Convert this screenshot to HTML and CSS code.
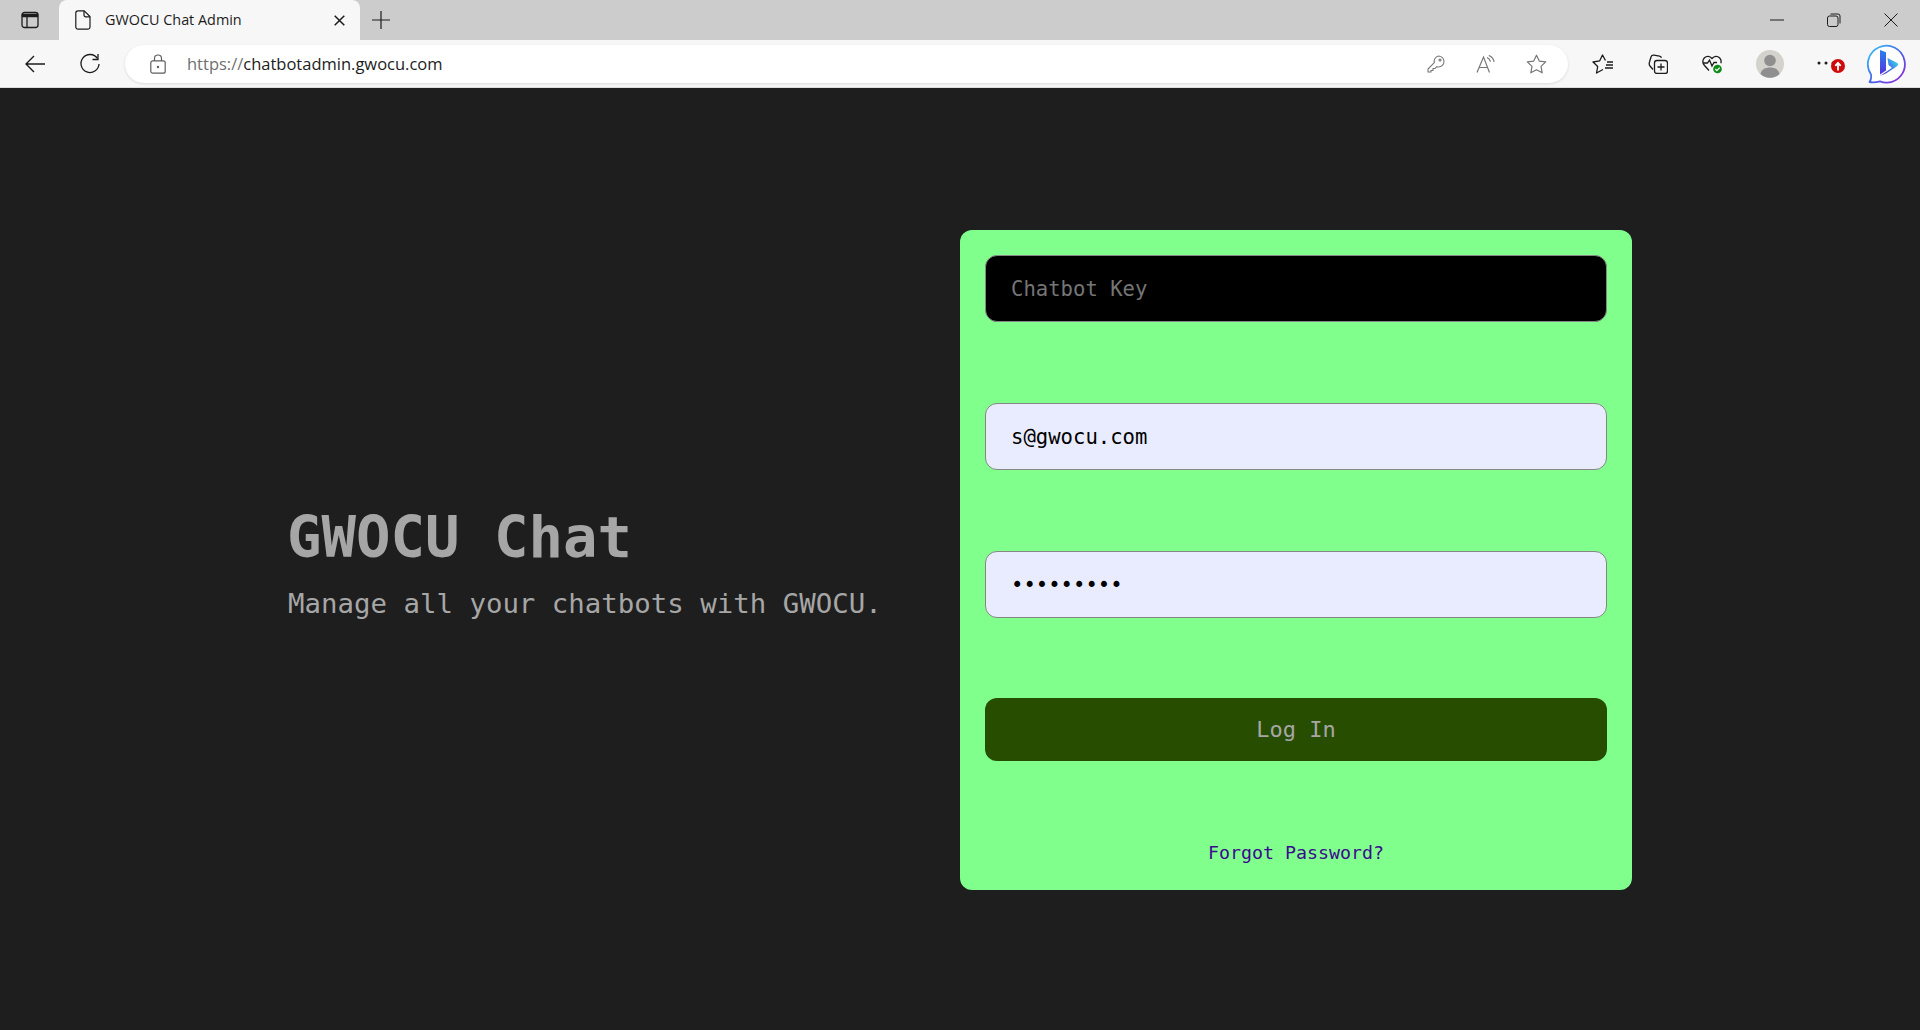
FILE: index.html
```html
<!DOCTYPE html>
<html lang="en">
<head>
  <meta charset="UTF-8">
  <meta name="viewport" content="width=device-width, initial-scale=1.0">
  <title>GWOCU Chat Admin</title>
  <link rel="stylesheet" href="styles.css">
</head>
<body>
  <div class="tab-strip">
    <button class="strip-btn sidebar-btn">
      <svg width="18" height="18" viewBox="0 0 18 18" fill="none" stroke="#1c1c1c" stroke-width="1.3"><rect x="1" y="1.5" width="16" height="15" rx="2.5"/><path d="M1.5 3.5h15v2.2h-15z" fill="#1c1c1c"/><path d="M6 5.5v10.5"/></svg>
    </button>
    <div class="tab">
      <svg width="16" height="20" viewBox="0 0 16 20" fill="none" stroke="#1c1c1c" stroke-width="1.2"><path d="M3 .8h6.2l5.8 5.8V17a2.2 2.2 0 0 1-2.2 2.2H3A2.2 2.2 0 0 1 .8 17V3A2.2 2.2 0 0 1 3 .8z"/><path d="M9 1v4a1.8 1.8 0 0 0 1.8 1.8H15"/></svg>
      <span class="tab-title">GWOCU Chat Admin</span>
      <svg class="tab-close" width="11" height="11" viewBox="0 0 11 11" stroke="#1c1c1c" stroke-width="1.5"><path d="M.7.7l9.6 9.6M10.3.7L.7 10.3"/></svg>
    </div>
    <button class="strip-btn new-tab">
      <svg width="18" height="18" viewBox="0 0 18 18" stroke="#1c1c1c" stroke-width="1.2"><path d="M9 0v18M0 9h18"/></svg>
    </button>
    <div class="window-btns">
      <button class="win-btn"><svg width="14" height="14" viewBox="0 0 14 14" stroke="#1c1c1c"><path d="M0 7h14"/></svg></button>
      <button class="win-btn"><svg width="14" height="14" viewBox="0 0 14 14" fill="none" stroke="#1c1c1c"><rect x=".5" y="3" width="10.5" height="10.5" rx="2"/><path d="M3.5 1h7.500a2 2 0 0 1 2 2v7.500"/></svg></button>
      <button class="win-btn"><svg width="14" height="14" viewBox="0 0 14 14" stroke="#1c1c1c"><path d="M.5.5l13 13M13.500.5l-13 13"/></svg></button>
    </div>
  </div>

  <div class="toolbar">
    <button class="tool-btn">
      <svg width="22" height="20" viewBox="0 0 22 20" fill="none" stroke="#1c1c1c" stroke-width="1.4"><path d="M21 10H2M10 2l-8 8 8 8"/></svg>
    </button>
    <button class="tool-btn">
      <svg width="22" height="22" viewBox="0 0 22 22" fill="none" stroke="#1c1c1c" stroke-width="1.3"><path d="M18.500 5.500A9 9 0 1 0 20 11"/><path d="M19 1v5.500h-5.500"/></svg>
    </button>
    <div class="address-bar">
      <svg class="lock" width="16" height="20" viewBox="0 0 16 20" fill="none" stroke="#5f5f5f" stroke-width="1.2"><rect x=".8" y="6.800" width="14.400" height="12.400" rx="2"/><path d="M4.500 7V4.500a3.500 3.500 0 0 1 7 0V7"/><circle cx="8" cy="13" r=".6" fill="#5f5f5f"/></svg>
      <span class="url"><span class="url-scheme">https://</span>chatbotadmin.gwocu.com</span>
      <div class="address-icons">
        <button class="addr-btn">
          <svg width="18" height="18" viewBox="0 0 18 18" fill="none" stroke="#777" stroke-width="1.1"><path d="M11.500 1a5.500 5.500 0 0 1 0 11c-.7 0-1.300-.1-1.900-.3L8 13.500H6v2H4V17H1v-3l6.300-6.300A5.500 5.500 0 0 1 11.500 1z"/><circle cx="13" cy="5" r="1"/></svg>
        </button>
        <button class="addr-btn">
          <svg width="20" height="18" viewBox="0 0 20 18" fill="none" stroke="#777" stroke-width="1.2"><path d="M1 17.500L7.500 2l6 15.500M3.200 12.500h8.600"/><path d="M11 2.500c1.800.8 3 2.200 3.500 4.200M12.800.5c2.800 1.100 4.700 3.300 5.400 6.300"/></svg>
        </button>
        <button class="addr-btn">
          <svg width="21" height="20" viewBox="0 0 21 20" fill="none" stroke="#777" stroke-width="1.2"><path d="M10.500 1.200l2.800 5.900 6.400.8-4.700 4.500 1.200 6.400-5.700-3.100-5.700 3.100L6 12.400 1.300 7.900l6.400-.8z" stroke-linejoin="round"/></svg>
        </button>
      </div>
    </div>
    <div class="tool-group">
      <button class="tool-item">
        <svg width="21" height="20" viewBox="0 0 21 20" fill="none" stroke="#1c1c1c" stroke-width="1.3"><path d="M13.500 6.500L10.500 1 7.700 6.800 1 8l4.700 4.500L4.500 19l6.500-3.500" stroke-linejoin="round"/><path d="M15 8h6M14 11h7M13 14h8"/></svg>
      </button>
      <button class="tool-item">
        <svg width="20" height="20" viewBox="0 0 20 20" fill="none" stroke="#1c1c1c" stroke-width="1.3"><path d="M5 15.500L2 12c-1-1.200-1-2.500-.5-4L3 3c.4-1.300 1.500-2 3-1.800l5.500 1c1 .2 1.700.7 2 1.500"/><rect x="6.500" y="6.500" width="13" height="13" rx="2.500"/><path d="M13 9.500v7M9.500 13h7"/></svg>
      </button>
      <button class="tool-item health">
        <svg width="21" height="20" viewBox="0 0 21 20" fill="none"><path d="M7 16.500L2.500 11.500C.5 9 .5 5.800 2.500 3.700 4.500 1.800 7.800 1.800 10 4.500c2.300-2.700 5.500-2.700 7.500-.8 1.500 1.500 2 3.500 1.300 5.500" stroke="#1c1c1c" stroke-width="1.300"/><path d="M1 9h4.500l2-3 2.500 6 2-3.500h3" stroke="#1c1c1c" stroke-width="1.300"/><circle cx="15.500" cy="15" r="4.300" fill="#0f8a18"/><path d="M13.300 15l1.600 1.600 2.800-3" stroke="#fff" stroke-width="1.200"/></svg>
      </button>
      <button class="tool-item avatar-item">
        <svg width="28" height="28" viewBox="0 0 28 28"><circle cx="14" cy="14" r="14" fill="#d4d2cc"/><circle cx="14" cy="10.500" r="5.800" fill="#8f8f8f"/><path d="M4.500 24c1-4.500 4.500-6.500 9.500-6.500s8.500 2 9.500 6.500a14 14 0 0 1-19 0z" fill="#8f8f8f"/></svg>
      </button>
      <button class="tool-item more-item">
        <svg class="more-dots" width="18" height="4" viewBox="0 0 18 4" fill="#1c1c1c"><circle cx="2" cy="2" r="1.500"/><circle cx="9" cy="2" r="1.500"/><circle cx="16" cy="2" r="1.500"/></svg>
        <svg class="update-badge" width="14" height="14" viewBox="0 0 14 14"><circle cx="7" cy="7" r="7" fill="#cf0a0a"/><path d="M7 11.500V4.500M4.300 6.800L7 3.800l2.700 3" fill="none" stroke="#fff" stroke-width="1.800"/></svg>
      </button>
      <button class="tool-item bing-item">
        <svg width="40" height="40" viewBox="0 0 40 40" fill="none">
          <defs>
            <linearGradient id="ring" x1="4" y1="4" x2="36" y2="36" gradientUnits="userSpaceOnUse"><stop offset="0" stop-color="#37bdf5"/><stop offset=".55" stop-color="#4b5fe8"/><stop offset="1" stop-color="#8f2cd8"/></linearGradient>
            <linearGradient id="stem" x1="15" y1="7" x2="17" y2="32" gradientUnits="userSpaceOnUse"><stop offset="0" stop-color="#2a7df0"/><stop offset="1" stop-color="#5a2fd6"/></linearGradient>
            <linearGradient id="bowl" x1="14" y1="30" x2="30" y2="18" gradientUnits="userSpaceOnUse"><stop offset="0" stop-color="#5a2fd6"/><stop offset=".6" stop-color="#3f7fe6"/><stop offset="1" stop-color="#3fd0ea"/></linearGradient>
          </defs>
          <path d="M2.500 38c1.500-2 2-4.500 1.500-7.500A18.500 18.500 0 1 1 20 38.700c-3 0-5-.4-7-1.300-3.500.9-7 1.400-10.500.6z" stroke="url(#ring)" stroke-width="1.800" stroke-linejoin="round" fill="#fff"/>
          <path d="M13 6l6 2.200v18.300l-6 4z" fill="url(#stem)"/>
          <path d="M20.500 14l9.500 4.800c1.500.8 1.500 2.400 0 3.400L19 29.500 13 32l11-7.500c.8-.6.700-1.300-.2-1.700L21.500 21z" fill="url(#bowl)"/>
        </svg>
      </button>
    </div>
  </div>

  <div class="main">
    <div class="login-row">
      <div class="intro">
        <h1>GWOCU Chat</h1>
        <p>Manage all your chatbots with GWOCU.</p>
      </div>
      <form class="login-card">
        <input class="field field-key" type="text" placeholder="Chatbot Key">
        <input class="field" type="text" value="s@gwocu.com">
        <input class="field" type="password" value="secret123">
        <button class="login-btn" type="button">Log In</button>
        <a class="forgot" href="#">Forgot Password?</a>
      </form>
    </div>
  </div>
</body>
</html>
```

FILE: styles.css
```css
* {
  box-sizing: border-box;
}
html, body {
  height: 100%;
}
body {
  margin: 0;
  display: flex;
  flex-direction: column;
  background-color: #1e1e1e;
  font-family: "DejaVu Sans Mono", "Liberation Mono", monospace;
  overflow: hidden;
}
button {
  padding: 0;
  border: none;
  background: none;
  font: inherit;
  cursor: pointer;
}
svg {
  display: block;
}

/* browser chrome */
.tab-strip {
  display: flex;
  align-items: stretch;
  height: 40px;
  background-color: #cccccc;
}
.strip-btn {
  display: flex;
  align-items: center;
  justify-content: center;
}
.sidebar-btn {
  width: 59px;
}
.tab {
  display: flex;
  align-items: center;
  width: 301px;
  padding: 0 15px 0 16px;
  background-color: #f7f7f7;
  border-radius: 8px 8px 0 0;
  font-family: "Open Sans", "Noto Sans", sans-serif;
  font-size: 14.4px;
  color: #1c1c1c;
}
.tab-title {
  margin-left: 14px;
  flex: 1;
  padding-bottom: 1px;
}
.new-tab {
  width: 41px;
}
.window-btns {
  display: flex;
  margin-left: auto;
  padding-right: 1px;
}
.win-btn {
  display: flex;
  align-items: center;
  justify-content: center;
  width: 57px;
}
.toolbar {
  display: flex;
  align-items: center;
  height: 48px;
  padding-left: 7px;
  background-color: #f7f7f7;
  border-bottom: 1px solid #dcdcdc;
}
.tool-btn {
  display: flex;
  align-items: center;
  justify-content: center;
  width: 55px;
  height: 38px;
}
.address-bar {
  display: flex;
  align-items: center;
  width: 1443px;
  height: 38px;
  margin-left: 8px;
  padding: 0 7px 0 25px;
  background-color: #fff;
  border-radius: 19px;
  box-shadow: 0 1px 3px rgba(0, 0, 0, 0.12);
  font-family: "Open Sans", "Noto Sans", sans-serif;
  font-size: 16.5px;
  color: #1c1c1c;
}
.url {
  margin-left: 21px;
}
.url-scheme {
  color: #6f6f6f;
}
.address-icons {
  display: flex;
  margin-left: auto;
}
.addr-btn {
  display: flex;
  align-items: center;
  justify-content: center;
  width: 50px;
  height: 38px;
}
.tool-group {
  display: flex;
  align-items: center;
  flex: 1;
  padding-left: 7px;
}
.tool-item {
  position: relative;
  display: flex;
  align-items: center;
  justify-content: center;
  width: 55px;
  height: 40px;
}
.avatar-item {
  margin-left: 2px;
}
.more-item {
  margin-left: -2px;
}
.more-dots {
  margin-top: -2px;
  margin-left: 6px;
}
.update-badge {
  position: absolute;
  top: 15px;
  right: 5px;
}
.bing-item {
  width: 40px;
  margin-left: 17px;
}

/* login page */
.main {
  flex: 1;
  display: flex;
  align-items: center;
  justify-content: center;
  padding-top: 2px;
}
.login-row {
  display: flex;
  align-items: center;
  width: 1344px;
}
.intro {
  width: 672px;
  padding-top: 6px;
  color: #a6a6a6;
}
.intro h1 {
  margin: 0 0 0 -1px;
  font-size: 57.3px;
  font-weight: bold;
  line-height: 1.2;
}
.intro p {
  margin: 13px 0 0;
  font-size: 27.4px;
  line-height: 1.3;
}
.login-card {
  display: flex;
  flex-direction: column;
  width: 672px;
  height: 660px;
  padding: 25px;
  background-color: #80ff8c;
  border-radius: 12px;
}
.field {
  width: 100%;
  height: 67px;
  margin-bottom: 81px;
  padding: 0 25px;
  background-color: #e9ecff;
  border: 1px solid #868686;
  border-radius: 12px;
  font-family: inherit;
  font-size: 20.6px;
  color: #000;
  outline: none;
}
.field-key {
  background-color: #000;
  color: #fff;
}
.field-key::placeholder {
  color: #757575;
}
.login-btn {
  height: 63px;
  margin-top: -1px;
  background-color: #264d00;
  border-radius: 12px;
  font-size: 22px;
  color: #a6a6a6;
}
.forgot {
  margin-top: 81px;
  text-align: center;
  font-size: 18.3px;
  color: #3c0a8f;
  text-decoration: none;
}
```
